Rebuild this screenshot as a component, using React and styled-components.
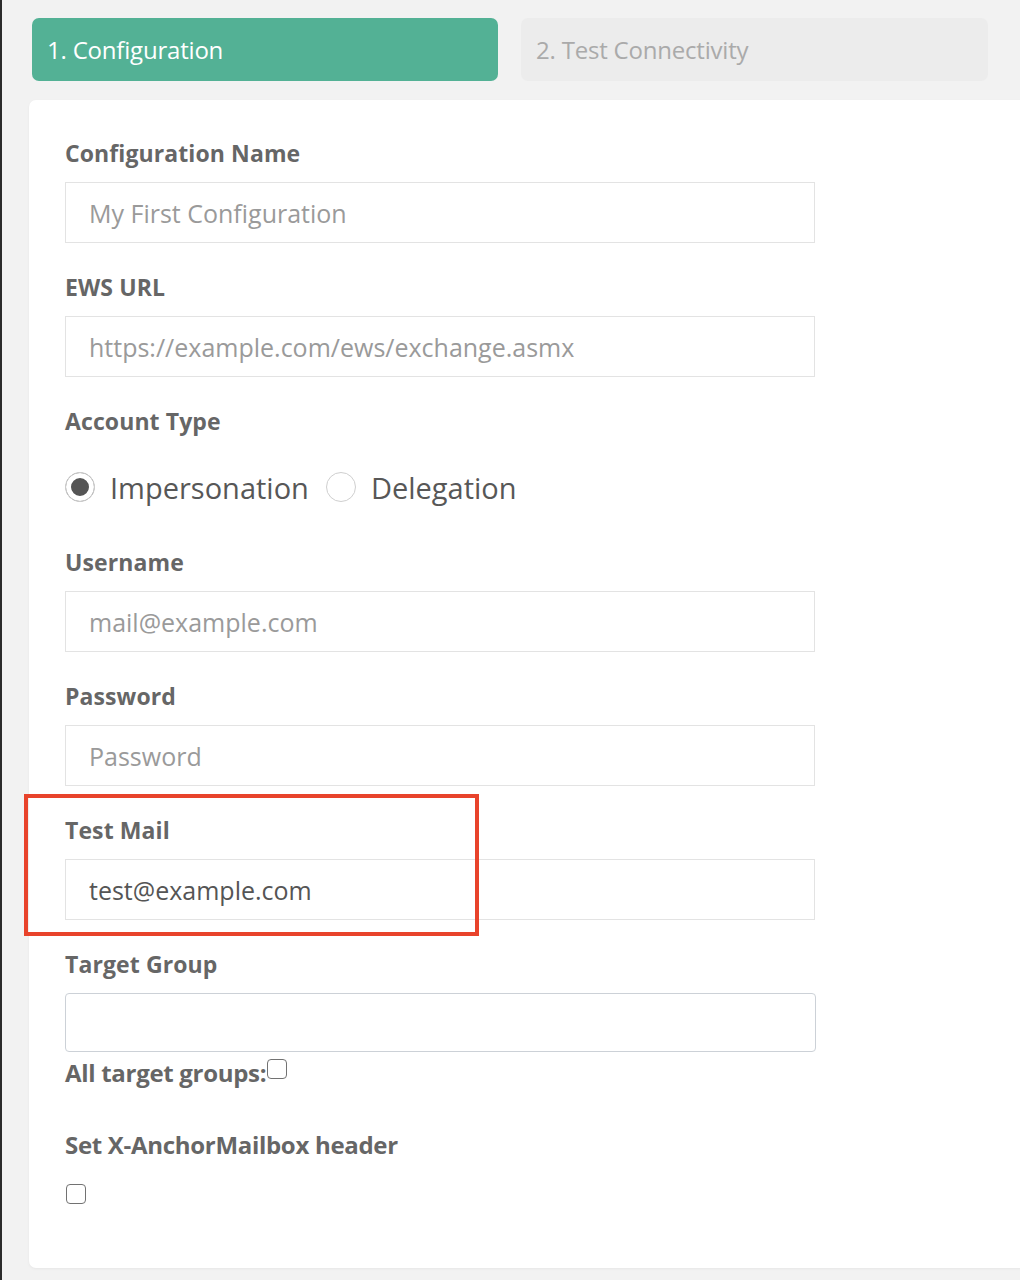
import React, { useState } from "react";
import styled, { createGlobalStyle } from "styled-components";

const GlobalStyle = createGlobalStyle`
  html, body {
    margin: 0;
    padding: 0;
    background: #f2f2f2;
    font-family: "Open Sans", "Noto Sans", sans-serif;
    overflow: hidden;
  }
  * { box-sizing: border-box; }
`;

const fields = [
  { label: "Configuration Name", placeholder: "My First Configuration" },
  { label: "EWS URL", placeholder: "https://example.com/ews/exchange.asmx" },
];

const credentials = [
  { label: "Username", placeholder: "mail@example.com" },
  { label: "Password", placeholder: "Password", type: "password" },
];

function App() {
  const [accountType, setAccountType] = useState("impersonation");
  const [testMail, setTestMail] = useState("test@example.com");

  return (
    <Page>
      <GlobalStyle />
      <Tabs>
        <Tab $active>1. Configuration</Tab>
        <Tab>2. Test Connectivity</Tab>
      </Tabs>
      <Card>
        {fields.map((f) => (
          <Field key={f.label}>
            <Label>{f.label}</Label>
            <Input placeholder={f.placeholder} />
          </Field>
        ))}

        <Field>
          <Label>Account Type</Label>
          <RadioRow>
            <RadioOption onClick={() => setAccountType("impersonation")}>
              <Radio $checked={accountType === "impersonation"} />
              Impersonation
            </RadioOption>
            <RadioOption onClick={() => setAccountType("delegation")}>
              <Radio $checked={accountType === "delegation"} />
              Delegation
            </RadioOption>
          </RadioRow>
        </Field>

        {credentials.map((f) => (
          <Field key={f.label}>
            <Label>{f.label}</Label>
            <Input placeholder={f.placeholder} />
          </Field>
        ))}

        <Field>
          <Highlight />
          <Label>Test Mail</Label>
          <Input value={testMail} onChange={(e) => setTestMail(e.target.value)} />
        </Field>

        <Field $gap="40px">
          <Label>Target Group</Label>
          <Select />
          <InlineLabel>
            All target groups:
            <Checkbox />
          </InlineLabel>
        </Field>

        <Field>
          <WideLabel>Set X-AnchorMailbox header</WideLabel>
          <CheckRow>
            <Checkbox />
          </CheckRow>
        </Field>
      </Card>
    </Page>
  );
}

const Page = styled.div`
  min-height: 1280px;
  border-left: 2px solid #2b2b2b;
  padding: 18px 0 0 27px;
`;

const Tabs = styled.div`
  display: grid;
  grid-template-columns: 466px 467px;
  gap: 23px;
  padding-left: 3px;
`;

const Tab = styled.div`
  height: 63px;
  display: flex;
  align-items: center;
  padding-left: 15px;
  border-radius: 7px;
  font-size: 24px;
  letter-spacing: -0.2px;
  background: ${(p) => (p.$active ? "#53b195" : "#ececec")};
  color: ${(p) => (p.$active ? "#ffffff" : "#aaaaaa")};
`;

const Card = styled.div`
  margin-top: 19px;
  margin-right: -20px;
  background: #ffffff;
  border-radius: 7px;
  box-shadow: 0 1px 3px rgba(0, 0, 0, 0.05);
  padding: 38px 0 50px 36px;
  height: 1168px;
`;

const Field = styled.div`
  position: relative;
  width: 750px;
  margin-bottom: ${(p) => p.$gap || "29px"};
`;

const Label = styled.div`
  font-size: 23px;
  line-height: 30px;
  font-weight: 700;
  letter-spacing: 0.1px;
  color: #666666;
  margin-bottom: 14px;
`;

const WideLabel = styled(Label)`
  font-size: 24px;
  letter-spacing: -0.3px;
  margin-bottom: 21px;
`;

const Input = styled.input`
  display: block;
  width: 750px;
  height: 61px;
  border: 1px solid #e3e3e3;
  border-radius: 0;
  padding: 0 23px;
  font-family: inherit;
  font-size: 25px;
  color: #555555;
  outline: none;
  &::placeholder {
    color: #9a9a9a;
  }
`;

const Select = styled.div`
  width: 751px;
  height: 59px;
  border: 1px solid #ccd1d7;
  border-radius: 4px;
`;

const InlineLabel = styled.label`
  display: flex;
  align-items: flex-start;
  font-size: 24px;
  line-height: 34px;
  font-weight: 700;
  letter-spacing: -0.3px;
  color: #666666;
  margin-top: 4px;
`;

const Checkbox = styled.span`
  display: inline-block;
  flex-shrink: 0;
  width: 20px;
  height: 20px;
  border: 1.5px solid #727272;
  border-radius: 4px;
  background: #ffffff;
  margin-top: 3px;
  margin-left: 1px;
`;

const CheckRow = styled.div`
  display: flex;
`;

const RadioRow = styled.div`
  display: flex;
  align-items: center;
  gap: 17px;
  height: 40px;
  margin-top: 31px;
  margin-bottom: 40px;
`;

const RadioOption = styled.div`
  display: flex;
  align-items: center;
  gap: 15px;
  font-size: 29px;
  color: #575757;
  cursor: pointer;
`;

const Radio = styled.span`
  width: 30px;
  height: 30px;
  border-radius: 50%;
  border: 1px solid ${(p) => (p.$checked ? "#d0d0d0" : "#cfcfcf")};
  background: ${(p) => (p.$checked ? "#555555" : "#ffffff")};
  box-shadow: inset 0 0 0 ${(p) => (p.$checked ? "5px" : "0")} #ffffff;
`;

const Highlight = styled.div`
  position: absolute;
  top: -21px;
  left: -41px;
  width: 455px;
  height: 142px;
  border: 4px solid #e8432b;
  pointer-events: none;
`;

export default App;
